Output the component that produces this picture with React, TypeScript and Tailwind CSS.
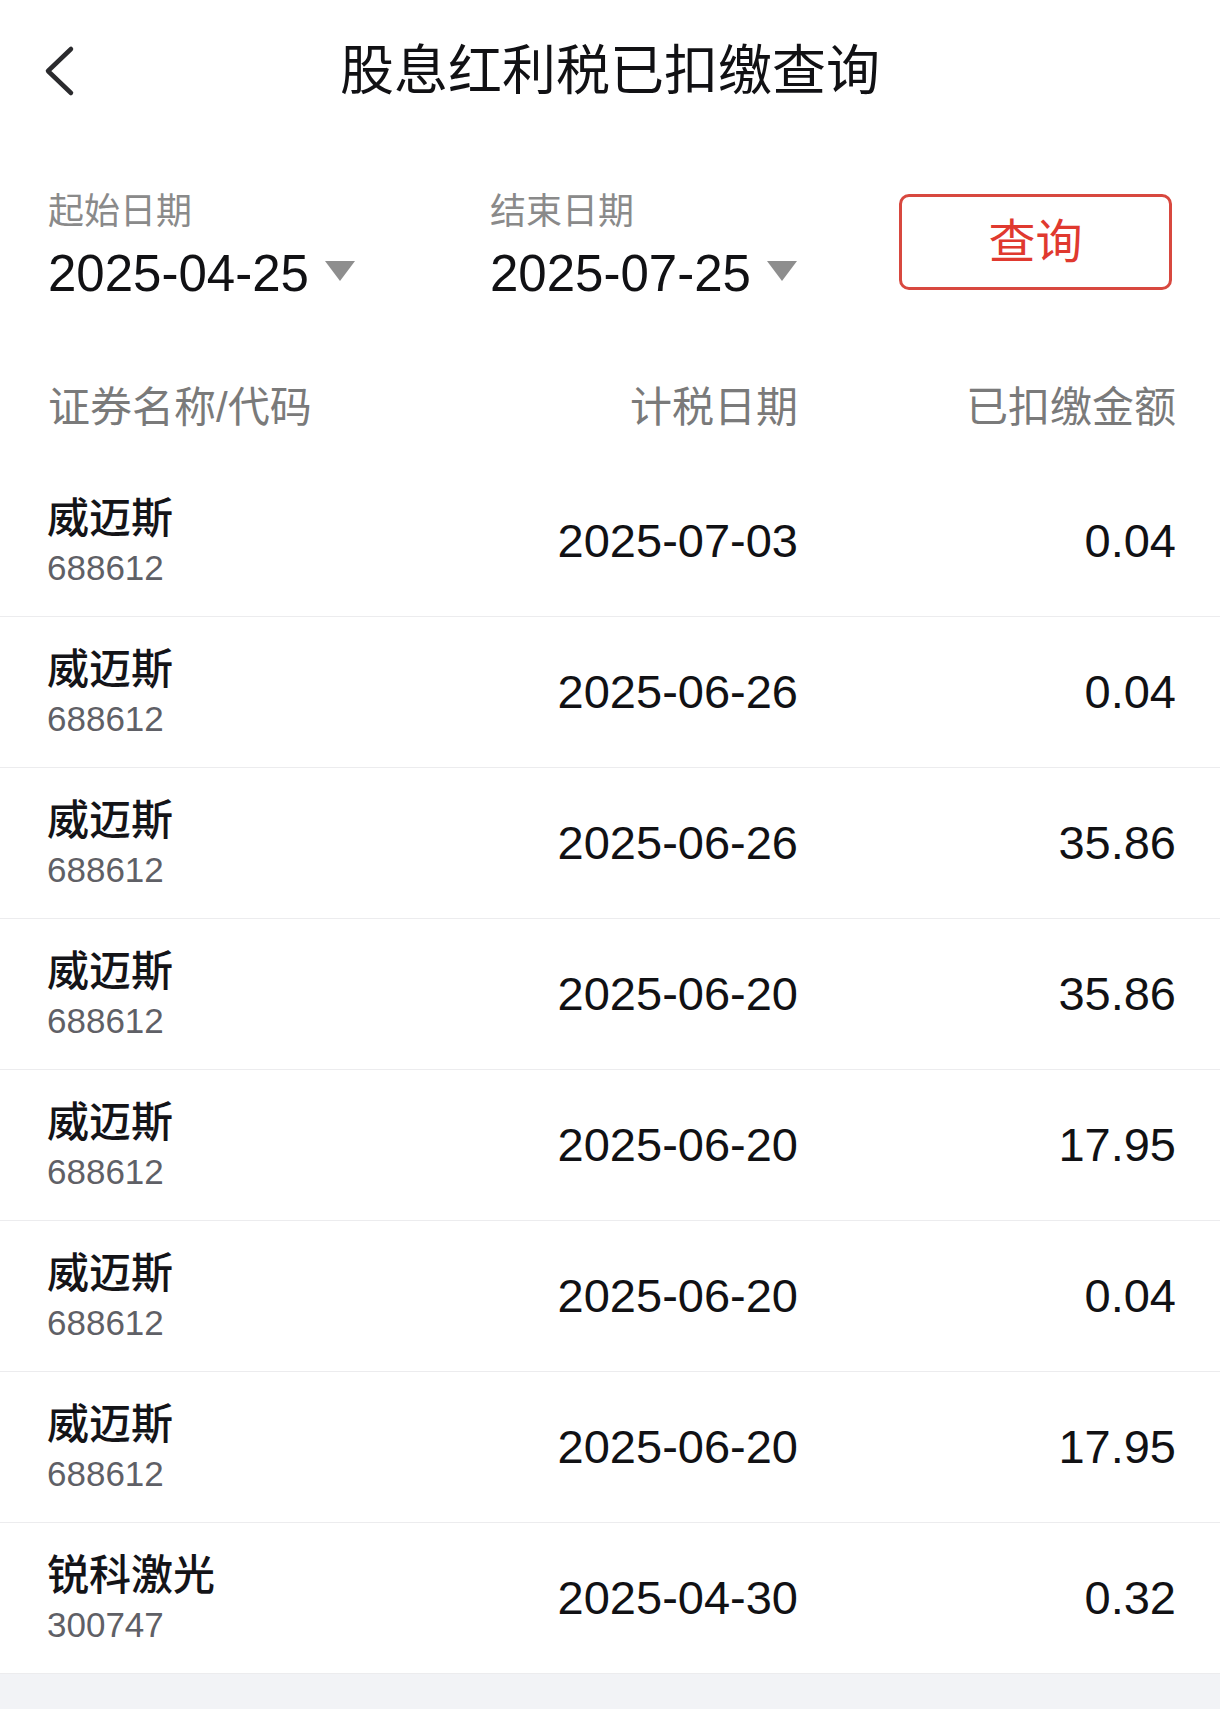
const records = [
    { name: '威迈斯', code: '688612', date: '2025-07-03', amount: '0.04' },
    { name: '威迈斯', code: '688612', date: '2025-06-26', amount: '0.04' },
    { name: '威迈斯', code: '688612', date: '2025-06-26', amount: '35.86' },
    { name: '威迈斯', code: '688612', date: '2025-06-20', amount: '35.86' },
    { name: '威迈斯', code: '688612', date: '2025-06-20', amount: '17.95' },
    { name: '威迈斯', code: '688612', date: '2025-06-20', amount: '0.04' },
    { name: '威迈斯', code: '688612', date: '2025-06-20', amount: '17.95' },
    { name: '锐科激光', code: '300747', date: '2025-04-30', amount: '0.32' },
];

const font = "font-['Liberation_Sans','Noto_Sans_CJK_SC',sans-serif]";

function DateField({ label, value }: { label: string; value: string }) {
    return (
        <div className="flex flex-col">
            <span className="text-[36px] leading-[40px] text-[#8a8a8a]">
                {label}
            </span>
            <div className="mt-[16px] flex items-center">
                <span className="text-[51px] leading-[52px] text-[#111114]">
                    {value}
                </span>
                {/* dropdown caret */}
                <svg
                    width="30"
                    height="20"
                    viewBox="0 0 30 20"
                    className="ml-[16px] mt-[-6px]"
                >
                    <polygon points="0,0 30,0 15,20" fill="#8e8e8e" />
                </svg>
            </div>
        </div>
    );
}

export default function App() {
    return (
        <div className={`${font} min-h-screen bg-[#f2f3f6]`}>
            <div className="bg-white">
                {/* Header */}
                <div className="relative flex h-[142px] items-center justify-center">
                    <button
                        className="absolute left-[42px] top-[45px]"
                        aria-label="back"
                    >
                        <svg width="34" height="52" viewBox="0 0 34 52" fill="none">
                            <polyline
                                points="29,4 6,26 29,48"
                                stroke="#2b2b2e"
                                strokeWidth="4.5"
                                strokeLinecap="round"
                                strokeLinejoin="round"
                            />
                        </svg>
                    </button>
                    <h1 className="text-[54px] leading-[60px] text-[#111114]">
                        股息红利税已扣缴查询
                    </h1>
                </div>

                {/* Filters */}
                <div className="flex h-[190px] items-start pl-[48px] pr-[48px] pt-[50px]">
                    <div className="w-[442px]">
                        <DateField label="起始日期" value="2025-04-25" />
                    </div>
                    <div className="flex-1">
                        <DateField label="结束日期" value="2025-07-25" />
                    </div>
                    <button className="mt-[2px] flex h-[96px] w-[273px] items-center justify-center rounded-[10px] border-[3px] border-[#d8483f] text-[47px] leading-[50px] text-[#e0392f]">
                        查询
                    </button>
                </div>

                {/* Table header */}
                <div className="flex h-[134px] items-center pl-[48px] pr-[44px] pt-[18px] text-[42px] leading-[48px] text-[#7a7a7a]">
                    <span className="flex-1">证券名称/代码</span>
                    <span className="w-[300px] text-right">计税日期</span>
                    <span className="w-[378px] text-right">已扣缴金额</span>
                </div>

                {/* Rows */}
                {records.map((r, i) => (
                    <div
                        key={i}
                        className="flex h-[151px] border-b border-[#ececee] pl-[47px] pr-[44px]"
                    >
                        <div className="flex flex-1 flex-col pt-[28px]">
                            <span className="text-[42px] leading-[50px] font-medium text-[#141418]">
                                {r.name}
                            </span>
                            <span className="text-[35px] leading-[48px] text-[#5f6066]">
                                {r.code}
                            </span>
                        </div>
                        <span className="w-[300px] self-center text-right text-[47px] leading-[52px] text-[#111114]">
                            {r.date}
                        </span>
                        <span className="w-[378px] self-center text-right text-[47px] leading-[52px] text-[#111114]">
                            {r.amount}
                        </span>
                    </div>
                ))}
            </div>
        </div>
    );
}
